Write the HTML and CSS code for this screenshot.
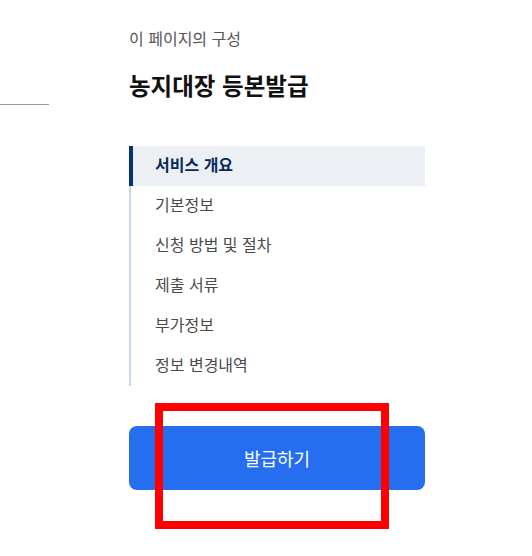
FILE: index.html
```html
<!DOCTYPE html>
<html lang="ko">
<head>
    <meta charset="UTF-8">
    <meta name="viewport" content="width=device-width, initial-scale=1.0">
    <title>농지대장 등본발급</title>
    <link rel="stylesheet" href="styles.css">
</head>
<body>
    <div class="pagina">
        <div class="lado">
            <div class="linea"></div>
        </div>
        <aside class="indice">
            <p class="sub">이 페이지의 구성</p>
            <h2 class="titulo">농지대장 등본발급</h2>
            <ul class="menu">
                <li class="activo">서비스 개요</li>
                <li>기본정보</li>
                <li>신청 방법 및 절차</li>
                <li>제출 서류</li>
                <li>부가정보</li>
                <li>정보 변경내역</li>
            </ul>
            <button class="boton">발급하기</button>
        </aside>
    </div>
    <div class="marca"></div>
</body>
</html>
```

FILE: styles.css
```css
body {
    font-family: "Noto Sans CJK KR", "Noto Sans", sans-serif;
    background: white;
    color: #1e1e1e;
    margin: 0;
}

.pagina {
    display: flex;
    gap: 80px;
}

.lado {
    width: 49px;
}

.linea {
    margin-top: 104px;
    height: 1px;
    background: #999;
}

.indice {
    width: 296px;
    padding-top: 27px;
}

.sub {
    margin: 0;
    font-size: 16px;
    line-height: 22px;
    color: #555;
}

.titulo {
    margin: 20px 0 0 0;
    font-size: 23.5px;
    line-height: 32px;
    font-weight: bold;
    color: #111;
}

.menu {
    list-style: none;
    margin: 45px 0 0 0;
    padding: 0;
    border-left: 2px solid #cdd7e4;
}

.menu li {
    height: 40px;
    line-height: 37px;
    padding-left: 24px;
    font-size: 16px;
    color: #4a4a4a;
}

.menu .activo {
    margin-left: -2px;
    border-left: 4px solid #003675;
    padding-left: 22px;
    background: #ecf0f5;
    color: #052b5c;
    font-weight: bold;
}

.boton {
    display: block;
    width: 100%;
    height: 64px;
    margin-top: 40px;
    border: none;
    border-radius: 8px;
    background: #256ef0;
    color: white;
    font-family: inherit;
    font-size: 18px;
}

.marca {
    position: absolute;
    left: 155px;
    top: 403px;
    width: 234px;
    height: 126px;
    box-sizing: border-box;
    border: 8px solid #ff0000;
}
```
